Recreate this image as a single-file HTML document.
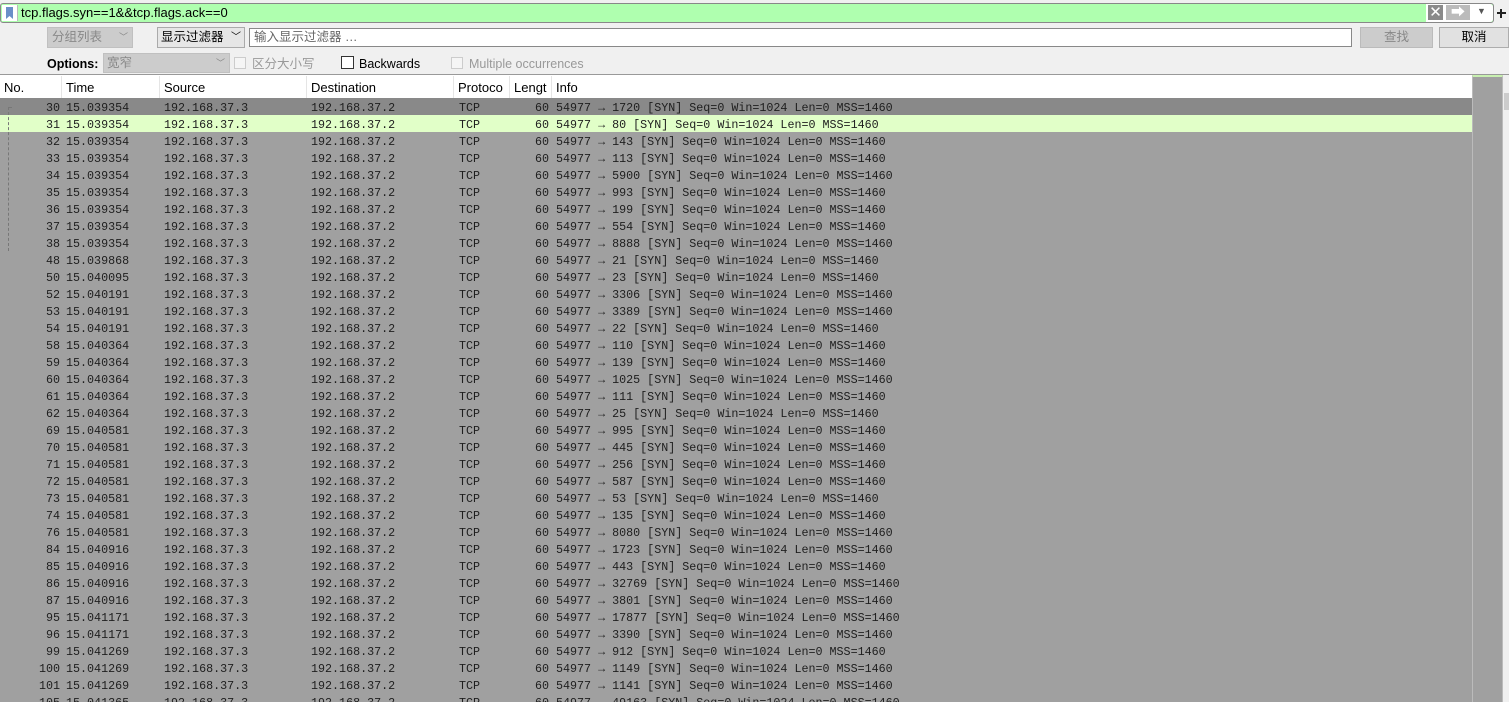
<!DOCTYPE html>
<html><head><meta charset="utf-8"><style>
*{margin:0;padding:0;box-sizing:border-box}
html,body{width:1509px;height:702px;overflow:hidden}
body{background:#f0f0f0;font-family:"Liberation Sans","Noto Sans CJK SC",sans-serif;font-size:12.5px;color:#000;position:relative}
.a{position:absolute;white-space:nowrap}
.r{position:absolute;left:0;width:1472px;height:17px;font-family:"Liberation Mono",monospace;font-size:11.7px;line-height:17px;color:#1e1e1e}
.r span{position:absolute;top:2px}
.n{right:1412px;text-align:right}
.t{left:66px}.s{left:164px}.d{left:311px}.p{left:459px}
.l{right:923px}.i{left:556px}
.h{position:absolute;top:76px;height:22px;line-height:23px;font-size:13px;border-right:1px solid #e5e5e5;padding-left:4px}
</style></head><body>
<div class="a" style="left:0;top:3px;width:1494px;height:20px;border:1px solid #888;border-radius:3px;background:#afffaf"></div>
<div class="a" style="left:2px;top:5px;width:16px;height:16px;background:#fff;border-right:1px solid #bbb"></div>
<div class="a" style="left:6px;top:7px;width:7px;height:12px;background:#6a8fc8;clip-path:polygon(0 0,100% 0,100% 100%,50% 75%,0 100%)"></div>
<div class="a" style="left:21px;top:4px;font-size:13px;line-height:18px">tcp.flags.syn==1&amp;&amp;tcp.flags.ack==0</div>
<div class="a" style="left:1426px;top:4px;width:67px;height:18px;background:#fff;border-radius:0 3px 3px 0"></div>
<div class="a" style="left:1428px;top:5px;width:15px;height:15px;background:#8a8a8a;color:#fff;font-size:15px;line-height:15px;text-align:center">✕</div>
<div class="a" style="left:1446px;top:5px;width:24px;height:15px;background:#bbb;color:#fff;font-size:14px;line-height:15px;text-align:center">➡</div>
<div class="a" style="left:1477px;top:6px;font-size:9px;color:#555">▼</div>
<div class="a" style="left:1497px;top:12px;width:9px;height:2px;background:#222"></div>
<div class="a" style="left:1500px;top:9px;width:2px;height:9px;background:#222"></div>
<div class="a" style="left:47px;top:27px;width:86px;height:21px;background:#ccc;border:1px solid #c0c0c0;color:#888;line-height:19px;padding-left:4px">分组列表 <span style="position:absolute;right:4px;font-size:9px">﹀</span></div>
<div class="a" style="left:157px;top:27px;width:88px;height:21px;background:#e6e6e6;border:1px solid #aaa;line-height:19px;padding-left:3px">显示过滤器 <span style="position:absolute;right:3px;font-size:10px">﹀</span></div>
<div class="a" style="left:249px;top:28px;width:1103px;height:19px;background:#fff;border:1px solid #888;color:#666;line-height:17px;padding-left:4px">输入显示过滤器 …</div>
<div class="a" style="left:1360px;top:27px;width:73px;height:21px;background:#ccc;border:1px solid #bbb;color:#888;text-align:center;line-height:19px">查找</div>
<div class="a" style="left:1439px;top:27px;width:70px;height:21px;background:#e1e1e1;border:1px solid #adadad;text-align:center;line-height:19px">取消</div>
<div class="a" style="left:47px;top:56px;font-weight:bold;line-height:16px">Options:</div>
<div class="a" style="left:103px;top:53px;width:127px;height:20px;background:#ccc;border:1px solid #c0c0c0;color:#888;line-height:19px;padding-left:3px">宽窄<span style="position:absolute;right:4px;font-size:9px">﹀</span></div>
<div class="a" style="left:234px;top:57px;width:12px;height:12px;border:1px solid #ccc;background:#f5f5f5"></div>
<div class="a" style="left:252px;top:56px;color:#999;line-height:16px">区分大小写</div>
<div class="a" style="left:341px;top:56px;width:13px;height:13px;border:1px solid #333;background:#fff"></div>
<div class="a" style="left:359px;top:56px;line-height:16px">Backwards</div>
<div class="a" style="left:451px;top:57px;width:12px;height:12px;border:1px solid #ccc;background:#f5f5f5"></div>
<div class="a" style="left:469px;top:56px;color:#999;line-height:16px">Multiple occurrences</div>
<div class="a" style="left:0;top:74px;width:1509px;height:1px;background:#999"></div>
<div class="a" style="left:0;top:75px;width:1472px;height:23px;background:#fff"></div>
<div class="h" style="left:0;width:62px">No.</div>
<div class="h" style="left:62px;width:98px">Time</div>
<div class="h" style="left:160px;width:147px">Source</div>
<div class="h" style="left:307px;width:147px">Destination</div>
<div class="h" style="left:454px;width:56px">Protoco</div>
<div class="h" style="left:510px;width:42px">Lengt</div>
<div class="h" style="left:552px;width:900px;border:none">Info</div>
<div class="a" style="left:0;top:98px;width:1472px;height:604px;background:#a0a0a0"></div>
<div class="a" style="left:1472px;top:75px;width:31px;height:627px;background:#a0a0a0;border-left:1px solid #bbb;border-right:1px solid #bbb;border-top:2px solid #c8f0b0"></div>
<div class="a" style="left:1503px;top:75px;width:6px;height:627px;background:#f0f0f0"></div>
<div class="a" style="left:1504px;top:93px;width:5px;height:17px;background:#ccc"></div>
<div class="a" style="left:0;top:98px;width:1472px;height:17px;background:#898989"></div>
<div class="a" style="left:0;top:115px;width:1472px;height:17px;background:#e1ffc8"></div>
<div class="a" style="left:8px;top:107px;width:0;height:144px;border-left:1px dashed #777"></div>
<div class="a" style="left:8px;top:107px;width:4px;height:0;border-top:1px solid #777"></div>

<div class="r" style="top:98px"><span class="n">30</span><span class="t">15.039354</span><span class="s">192.168.37.3</span><span class="d">192.168.37.2</span><span class="p">TCP</span><span class="l">60</span><span class="i">54977 → 1720 [SYN] Seq=0 Win=1024 Len=0 MSS=1460</span></div>
<div class="r" style="top:115px"><span class="n">31</span><span class="t">15.039354</span><span class="s">192.168.37.3</span><span class="d">192.168.37.2</span><span class="p">TCP</span><span class="l">60</span><span class="i">54977 → 80 [SYN] Seq=0 Win=1024 Len=0 MSS=1460</span></div>
<div class="r" style="top:132px"><span class="n">32</span><span class="t">15.039354</span><span class="s">192.168.37.3</span><span class="d">192.168.37.2</span><span class="p">TCP</span><span class="l">60</span><span class="i">54977 → 143 [SYN] Seq=0 Win=1024 Len=0 MSS=1460</span></div>
<div class="r" style="top:149px"><span class="n">33</span><span class="t">15.039354</span><span class="s">192.168.37.3</span><span class="d">192.168.37.2</span><span class="p">TCP</span><span class="l">60</span><span class="i">54977 → 113 [SYN] Seq=0 Win=1024 Len=0 MSS=1460</span></div>
<div class="r" style="top:166px"><span class="n">34</span><span class="t">15.039354</span><span class="s">192.168.37.3</span><span class="d">192.168.37.2</span><span class="p">TCP</span><span class="l">60</span><span class="i">54977 → 5900 [SYN] Seq=0 Win=1024 Len=0 MSS=1460</span></div>
<div class="r" style="top:183px"><span class="n">35</span><span class="t">15.039354</span><span class="s">192.168.37.3</span><span class="d">192.168.37.2</span><span class="p">TCP</span><span class="l">60</span><span class="i">54977 → 993 [SYN] Seq=0 Win=1024 Len=0 MSS=1460</span></div>
<div class="r" style="top:200px"><span class="n">36</span><span class="t">15.039354</span><span class="s">192.168.37.3</span><span class="d">192.168.37.2</span><span class="p">TCP</span><span class="l">60</span><span class="i">54977 → 199 [SYN] Seq=0 Win=1024 Len=0 MSS=1460</span></div>
<div class="r" style="top:217px"><span class="n">37</span><span class="t">15.039354</span><span class="s">192.168.37.3</span><span class="d">192.168.37.2</span><span class="p">TCP</span><span class="l">60</span><span class="i">54977 → 554 [SYN] Seq=0 Win=1024 Len=0 MSS=1460</span></div>
<div class="r" style="top:234px"><span class="n">38</span><span class="t">15.039354</span><span class="s">192.168.37.3</span><span class="d">192.168.37.2</span><span class="p">TCP</span><span class="l">60</span><span class="i">54977 → 8888 [SYN] Seq=0 Win=1024 Len=0 MSS=1460</span></div>
<div class="r" style="top:251px"><span class="n">48</span><span class="t">15.039868</span><span class="s">192.168.37.3</span><span class="d">192.168.37.2</span><span class="p">TCP</span><span class="l">60</span><span class="i">54977 → 21 [SYN] Seq=0 Win=1024 Len=0 MSS=1460</span></div>
<div class="r" style="top:268px"><span class="n">50</span><span class="t">15.040095</span><span class="s">192.168.37.3</span><span class="d">192.168.37.2</span><span class="p">TCP</span><span class="l">60</span><span class="i">54977 → 23 [SYN] Seq=0 Win=1024 Len=0 MSS=1460</span></div>
<div class="r" style="top:285px"><span class="n">52</span><span class="t">15.040191</span><span class="s">192.168.37.3</span><span class="d">192.168.37.2</span><span class="p">TCP</span><span class="l">60</span><span class="i">54977 → 3306 [SYN] Seq=0 Win=1024 Len=0 MSS=1460</span></div>
<div class="r" style="top:302px"><span class="n">53</span><span class="t">15.040191</span><span class="s">192.168.37.3</span><span class="d">192.168.37.2</span><span class="p">TCP</span><span class="l">60</span><span class="i">54977 → 3389 [SYN] Seq=0 Win=1024 Len=0 MSS=1460</span></div>
<div class="r" style="top:319px"><span class="n">54</span><span class="t">15.040191</span><span class="s">192.168.37.3</span><span class="d">192.168.37.2</span><span class="p">TCP</span><span class="l">60</span><span class="i">54977 → 22 [SYN] Seq=0 Win=1024 Len=0 MSS=1460</span></div>
<div class="r" style="top:336px"><span class="n">58</span><span class="t">15.040364</span><span class="s">192.168.37.3</span><span class="d">192.168.37.2</span><span class="p">TCP</span><span class="l">60</span><span class="i">54977 → 110 [SYN] Seq=0 Win=1024 Len=0 MSS=1460</span></div>
<div class="r" style="top:353px"><span class="n">59</span><span class="t">15.040364</span><span class="s">192.168.37.3</span><span class="d">192.168.37.2</span><span class="p">TCP</span><span class="l">60</span><span class="i">54977 → 139 [SYN] Seq=0 Win=1024 Len=0 MSS=1460</span></div>
<div class="r" style="top:370px"><span class="n">60</span><span class="t">15.040364</span><span class="s">192.168.37.3</span><span class="d">192.168.37.2</span><span class="p">TCP</span><span class="l">60</span><span class="i">54977 → 1025 [SYN] Seq=0 Win=1024 Len=0 MSS=1460</span></div>
<div class="r" style="top:387px"><span class="n">61</span><span class="t">15.040364</span><span class="s">192.168.37.3</span><span class="d">192.168.37.2</span><span class="p">TCP</span><span class="l">60</span><span class="i">54977 → 111 [SYN] Seq=0 Win=1024 Len=0 MSS=1460</span></div>
<div class="r" style="top:404px"><span class="n">62</span><span class="t">15.040364</span><span class="s">192.168.37.3</span><span class="d">192.168.37.2</span><span class="p">TCP</span><span class="l">60</span><span class="i">54977 → 25 [SYN] Seq=0 Win=1024 Len=0 MSS=1460</span></div>
<div class="r" style="top:421px"><span class="n">69</span><span class="t">15.040581</span><span class="s">192.168.37.3</span><span class="d">192.168.37.2</span><span class="p">TCP</span><span class="l">60</span><span class="i">54977 → 995 [SYN] Seq=0 Win=1024 Len=0 MSS=1460</span></div>
<div class="r" style="top:438px"><span class="n">70</span><span class="t">15.040581</span><span class="s">192.168.37.3</span><span class="d">192.168.37.2</span><span class="p">TCP</span><span class="l">60</span><span class="i">54977 → 445 [SYN] Seq=0 Win=1024 Len=0 MSS=1460</span></div>
<div class="r" style="top:455px"><span class="n">71</span><span class="t">15.040581</span><span class="s">192.168.37.3</span><span class="d">192.168.37.2</span><span class="p">TCP</span><span class="l">60</span><span class="i">54977 → 256 [SYN] Seq=0 Win=1024 Len=0 MSS=1460</span></div>
<div class="r" style="top:472px"><span class="n">72</span><span class="t">15.040581</span><span class="s">192.168.37.3</span><span class="d">192.168.37.2</span><span class="p">TCP</span><span class="l">60</span><span class="i">54977 → 587 [SYN] Seq=0 Win=1024 Len=0 MSS=1460</span></div>
<div class="r" style="top:489px"><span class="n">73</span><span class="t">15.040581</span><span class="s">192.168.37.3</span><span class="d">192.168.37.2</span><span class="p">TCP</span><span class="l">60</span><span class="i">54977 → 53 [SYN] Seq=0 Win=1024 Len=0 MSS=1460</span></div>
<div class="r" style="top:506px"><span class="n">74</span><span class="t">15.040581</span><span class="s">192.168.37.3</span><span class="d">192.168.37.2</span><span class="p">TCP</span><span class="l">60</span><span class="i">54977 → 135 [SYN] Seq=0 Win=1024 Len=0 MSS=1460</span></div>
<div class="r" style="top:523px"><span class="n">76</span><span class="t">15.040581</span><span class="s">192.168.37.3</span><span class="d">192.168.37.2</span><span class="p">TCP</span><span class="l">60</span><span class="i">54977 → 8080 [SYN] Seq=0 Win=1024 Len=0 MSS=1460</span></div>
<div class="r" style="top:540px"><span class="n">84</span><span class="t">15.040916</span><span class="s">192.168.37.3</span><span class="d">192.168.37.2</span><span class="p">TCP</span><span class="l">60</span><span class="i">54977 → 1723 [SYN] Seq=0 Win=1024 Len=0 MSS=1460</span></div>
<div class="r" style="top:557px"><span class="n">85</span><span class="t">15.040916</span><span class="s">192.168.37.3</span><span class="d">192.168.37.2</span><span class="p">TCP</span><span class="l">60</span><span class="i">54977 → 443 [SYN] Seq=0 Win=1024 Len=0 MSS=1460</span></div>
<div class="r" style="top:574px"><span class="n">86</span><span class="t">15.040916</span><span class="s">192.168.37.3</span><span class="d">192.168.37.2</span><span class="p">TCP</span><span class="l">60</span><span class="i">54977 → 32769 [SYN] Seq=0 Win=1024 Len=0 MSS=1460</span></div>
<div class="r" style="top:591px"><span class="n">87</span><span class="t">15.040916</span><span class="s">192.168.37.3</span><span class="d">192.168.37.2</span><span class="p">TCP</span><span class="l">60</span><span class="i">54977 → 3801 [SYN] Seq=0 Win=1024 Len=0 MSS=1460</span></div>
<div class="r" style="top:608px"><span class="n">95</span><span class="t">15.041171</span><span class="s">192.168.37.3</span><span class="d">192.168.37.2</span><span class="p">TCP</span><span class="l">60</span><span class="i">54977 → 17877 [SYN] Seq=0 Win=1024 Len=0 MSS=1460</span></div>
<div class="r" style="top:625px"><span class="n">96</span><span class="t">15.041171</span><span class="s">192.168.37.3</span><span class="d">192.168.37.2</span><span class="p">TCP</span><span class="l">60</span><span class="i">54977 → 3390 [SYN] Seq=0 Win=1024 Len=0 MSS=1460</span></div>
<div class="r" style="top:642px"><span class="n">99</span><span class="t">15.041269</span><span class="s">192.168.37.3</span><span class="d">192.168.37.2</span><span class="p">TCP</span><span class="l">60</span><span class="i">54977 → 912 [SYN] Seq=0 Win=1024 Len=0 MSS=1460</span></div>
<div class="r" style="top:659px"><span class="n">100</span><span class="t">15.041269</span><span class="s">192.168.37.3</span><span class="d">192.168.37.2</span><span class="p">TCP</span><span class="l">60</span><span class="i">54977 → 1149 [SYN] Seq=0 Win=1024 Len=0 MSS=1460</span></div>
<div class="r" style="top:676px"><span class="n">101</span><span class="t">15.041269</span><span class="s">192.168.37.3</span><span class="d">192.168.37.2</span><span class="p">TCP</span><span class="l">60</span><span class="i">54977 → 1141 [SYN] Seq=0 Win=1024 Len=0 MSS=1460</span></div>
<div class="r" style="top:693px"><span class="n">105</span><span class="t">15.041365</span><span class="s">192.168.37.3</span><span class="d">192.168.37.2</span><span class="p">TCP</span><span class="l">60</span><span class="i">54977 → 49163 [SYN] Seq=0 Win=1024 Len=0 MSS=1460</span></div>
</body></html>
